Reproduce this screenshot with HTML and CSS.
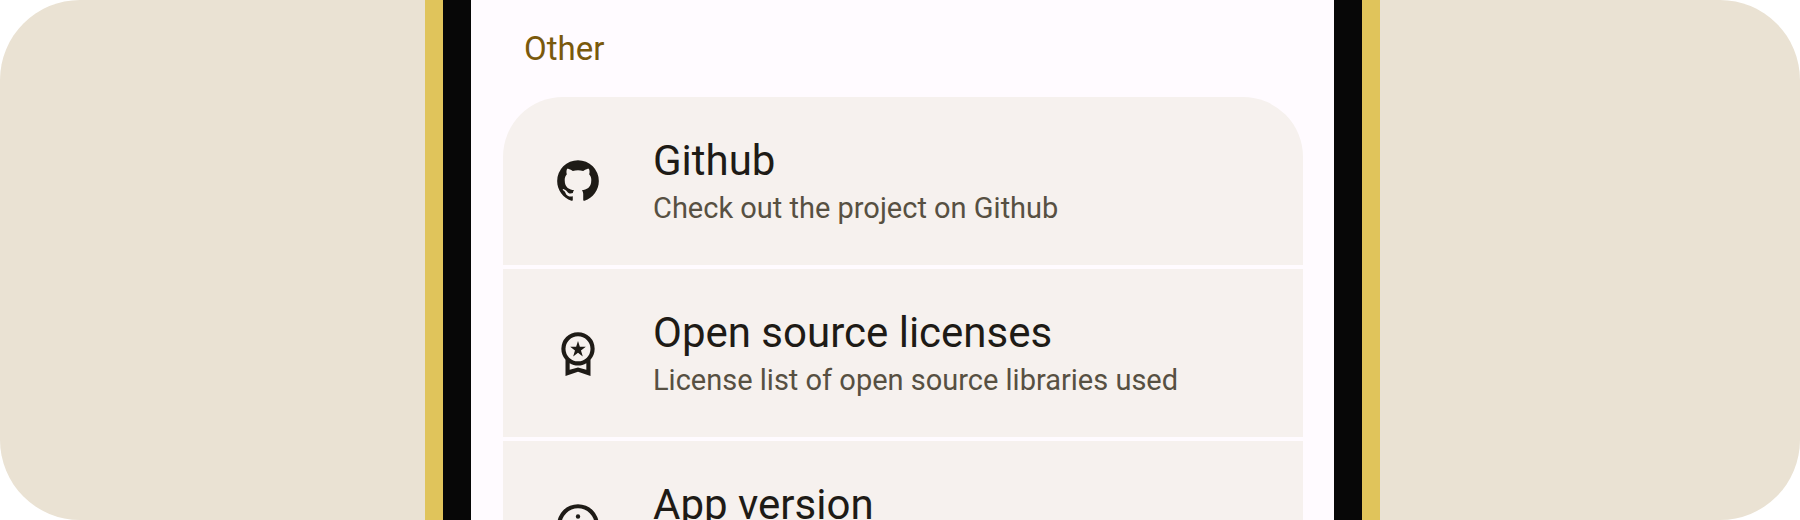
FILE: index.html
```html
<!DOCTYPE html>
<html lang="en">
<head>
<meta charset="utf-8">
<meta name="viewport" content="width=device-width, initial-scale=1">
<title>Other</title>
<link rel="stylesheet" href="styles.css">
</head>
<body>
<div class="stage">
  <div class="phone">
    <main class="screen">
      <h2 class="section-title">Other</h2>
      <div class="list">
        <a class="row" href="#github">
          <svg class="icon" viewBox="0 0 24 24" aria-hidden="true"><path d="M12 2A10 10 0 0 0 2 12c0 4.42 2.87 8.17 6.84 9.5.5.08.66-.23.66-.5v-1.69c-2.77.6-3.36-1.34-3.36-1.34-.46-1.16-1.11-1.47-1.11-1.47-.91-.62.07-.6.07-.6 1 .07 1.53 1.03 1.53 1.03.87 1.52 2.34 1.07 2.91.83.09-.65.35-1.09.63-1.34-2.22-.25-4.55-1.11-4.55-4.92 0-1.11.38-2 1.03-2.71-.1-.25-.45-1.29.1-2.64 0 0 .84-.27 2.75 1.02.79-.22 1.65-.33 2.5-.33s1.71.11 2.5.33c1.91-1.29 2.75-1.02 2.75-1.02.55 1.35.2 2.39.1 2.64.65.71 1.03 1.6 1.03 2.71 0 3.82-2.34 4.66-4.57 4.91.36.31.69.92.69 1.85V21c0 .27.16.59.67.5C19.14 20.16 22 16.42 22 12A10 10 0 0 0 12 2z"/></svg>
          <span class="text">
            <span class="title">Github</span>
            <span class="subtitle">Check out the project on Github</span>
          </span>
        </a>
        <a class="row" href="#licenses">
          <svg class="icon" viewBox="0 -960 960 960" aria-hidden="true"><path d="m387-412 35-114-92-74h114l36-112 36 112h114l-93 74 35 114-92-71-93 71ZM240-40v-309q-38-42-59-96t-21-115q0-134 93-227t227-93q134 0 227 93t93 227q0 61-21 115t-59 96v309l-240-80-240 80Zm240-280q100 0 170-70t70-170q0-100-70-170t-170-70q-100 0-170 70t-70 170q0 100 70 170t170 70ZM320-159l160-41 160 41v-124q-35 20-75.500 31.500T480-240q-44 0-84.500-11.500T320-283v124Z"/></svg>
          <span class="text">
            <span class="title">Open source licenses</span>
            <span class="subtitle">License list of open source libraries used</span>
          </span>
        </a>
        <a class="row" href="#version">
          <svg class="icon" viewBox="0 0 24 24" aria-hidden="true"><path d="M12 2a10 10 0 1 0 0 20 10 10 0 0 0 0-20zm0 18a8 8 0 1 1 0-16 8 8 0 0 1 0 16zM11 11h2v6h-2z"/><circle cx="12" cy="7.900" r="1.050"/></svg>
          <span class="text">
            <span class="title">App version</span>
          </span>
        </a>
      </div>
    </main>
  </div>
</div>
</body>
</html>
```
FILE: styles.css
```css
* {
  box-sizing: border-box;
}

body {
  margin: 0;
  background: #ffffff;
  font-family: Roboto, "Liberation Sans", sans-serif;
}

.stage {
  display: flex;
  justify-content: center;
  height: 100vh;
  padding-left: 5px;
  overflow: hidden;
  background: #eae2d3;
  border-radius: 80px;
}

.phone {
  flex: 0 1 955px;
  align-self: flex-start;
  border: solid #e0c45b;
  border-width: 0 18px;
}

.screen {
  padding: 29px 31px 32px 32px;
  border: solid #070707;
  border-width: 0 28px;
  background: #fffbff;
}

.section-title {
  margin: 0 0 28px;
  padding-left: 21px;
  font-size: 33px;
  font-weight: 400;
  line-height: 40px;
  color: #7a590c;
}

.list {
  display: flex;
  flex-direction: column;
  gap: 4px;
  overflow: hidden;
  border-radius: 60px;
}

.row {
  display: flex;
  align-items: center;
  gap: 50px;
  min-height: 168px;
  padding: 0 50px;
  background: #f6f1ee;
  color: #1e1b16;
  text-decoration: none;
}

.icon {
  flex: none;
  width: 50px;
  height: 50px;
  fill: currentColor;
}

.text {
  display: flex;
  flex-direction: column;
  align-self: flex-start;
  gap: 2px;
  padding-top: 39px;
}

.title {
  font-size: 42px;
  line-height: 50px;
}

.subtitle {
  font-size: 29px;
  line-height: 40px;
  color: #575042;
}
```
